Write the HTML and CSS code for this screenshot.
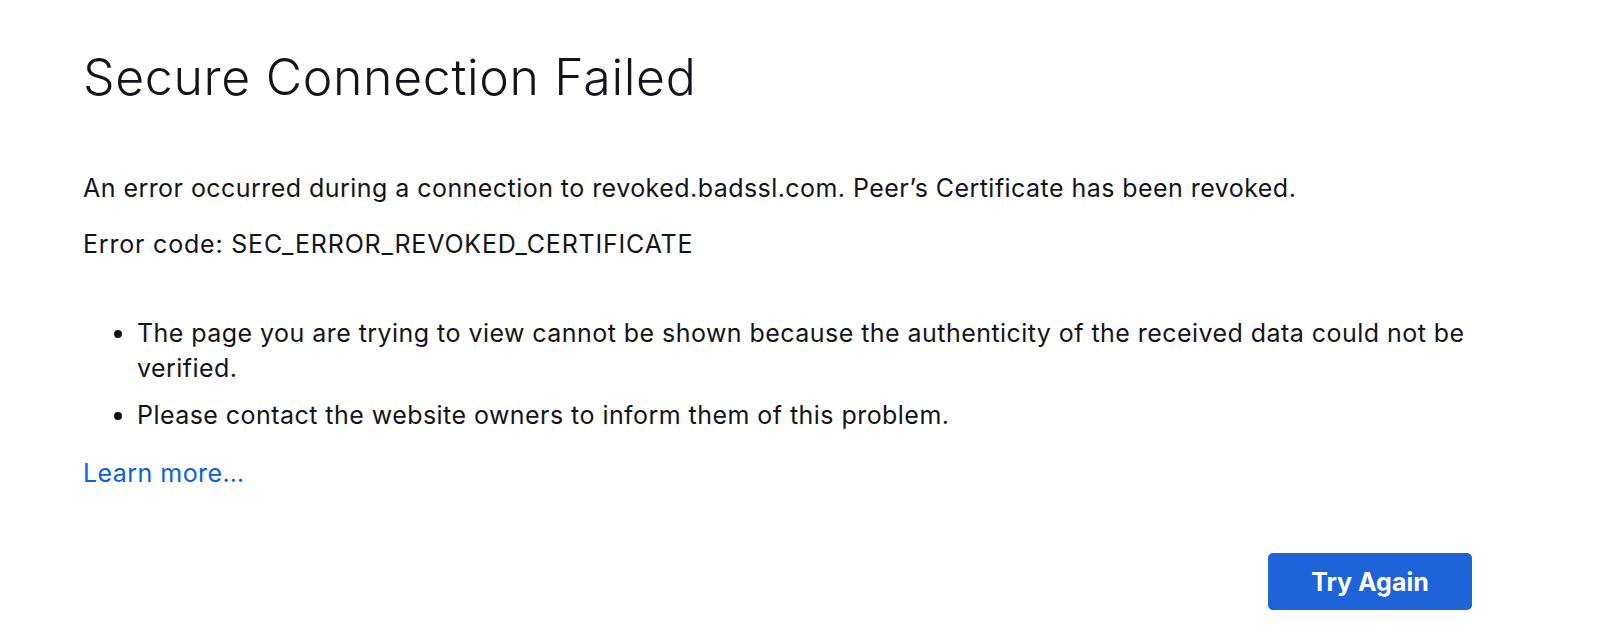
FILE: index.html
```html
<!DOCTYPE html>
<html lang="en">
<head>
<meta charset="utf-8">
<title>Secure Connection Failed</title>
<link rel="stylesheet" href="styles.css">
</head>
<body>
<main class="page">
  <h1 class="title">Secure Connection Failed</h1>
  <p class="desc">An error occurred during a connection to revoked.badssl.com. Peer’s Certificate has been revoked.</p>
  <p class="code">Error code: SEC_ERROR_REVOKED_CERTIFICATE</p>
  <ul class="reasons">
    <li>The page you are trying to view cannot be shown because the authenticity of the received data could not be verified.</li>
    <li>Please contact the website owners to inform them of this problem.</li>
  </ul>
  <a class="learn" href="#">Learn more…</a>
  <div class="actions">
    <button class="retry" type="button">Try Again</button>
  </div>
</main>
</body>
</html>
```

FILE: styles.css
```css
html, body {
  margin: 0;
  padding: 0;
  background: #ffffff;
}

body {
  font-family: "Inter", "Noto Sans", sans-serif;
  color: #15141a;
}

.page {
  width: 1389px;
  padding: 48px 0 0 83px;
  display: flex;
  flex-direction: column;
  align-items: flex-start;
}

.title {
  margin: 0;
  font-size: 50px;
  font-weight: 300;
  line-height: 58px;
  letter-spacing: 0.65px;
}

.desc,
.code,
.reasons,
.learn {
  font-size: 25px;
  line-height: 35px;
  letter-spacing: 0.45px;
}

.desc,
.code {
  margin: 0;
}

.desc {
  margin-top: 65px;
}

.code {
  margin-top: 21px;
  letter-spacing: 0.8px;
}

.reasons {
  margin: 54px 0 0 0;
  padding: 0 0 0 54px;
}

.reasons li + li {
  margin-top: 12px;
}

.learn {
  margin-top: 23px;
  color: #0b62db;
  text-decoration: none;
}

.actions {
  align-self: stretch;
  display: flex;
  justify-content: flex-end;
  margin-top: 62px;
}

.retry {
  width: 204px;
  height: 57px;
  border: none;
  border-radius: 5px;
  background: #1f63d8;
  color: #ffffff;
  font-family: "Inter", "Noto Sans", sans-serif;
  font-size: 25px;
  font-weight: 700;
}
```
